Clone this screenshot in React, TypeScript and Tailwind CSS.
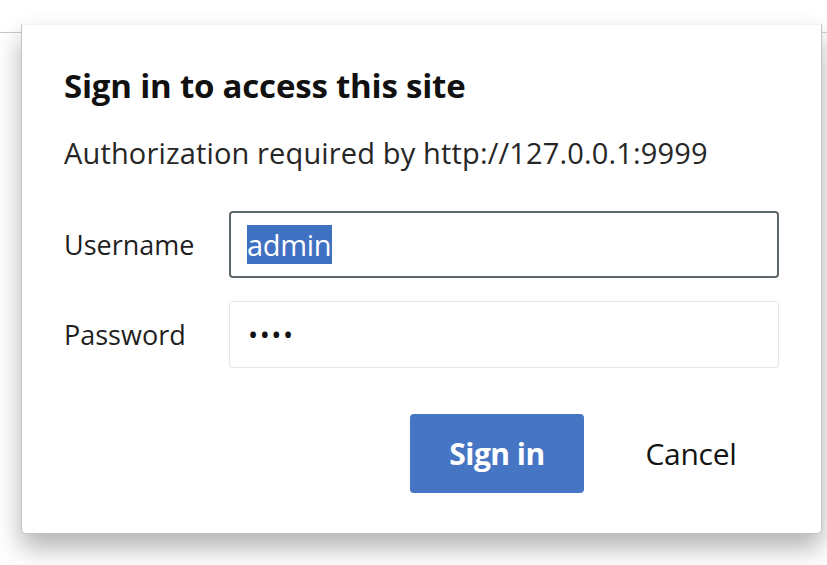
export default function App() {
  return (
    <div className="flex h-[565px] w-[827px] items-start overflow-hidden bg-white pt-[24px] font-['Open_Sans',sans-serif] text-[#1b1b1b]">
      {/* window edge behind the dialog */}
      <div className="mt-[8px] w-[21px] border-t border-[#c8c8c8]" />

      <div className="flex w-[801px] flex-col rounded-b-[5px] border border-t-[#f2f2f2] border-x-[#c4c4c4] border-b-[#c4c4c4] bg-white pl-[42px] pr-[42px] pt-[41px] pb-[40px] shadow-[0_14px_26px_rgba(0,0,0,0.3)]">
        <h1 className="text-[33px] font-bold leading-[40px] tracking-[-0.2px] text-[#111]">
          Sign in to access this site
        </h1>
        <p className="mt-[29px] text-[29px] leading-[36px] tracking-[0.15px] text-[#262626]">
          Authorization required by http://127.0.0.1:9999
        </p>

        <div className="mt-[40px] flex items-center">
          <label className="w-[165px] text-[27px] leading-[36px] text-[#1f1f1f]">Username</label>
          <div className="flex h-[67px] w-[550px] items-center rounded-[4px] border-2 border-[#5d676c] pl-[16px]">
            <span className="bg-[#3f70c2] pr-[1px] text-[29px] leading-[39px] tracking-[-0.3px] text-white">admin</span>
          </div>
        </div>

        <div className="mt-[23px] flex items-center">
          <label className="w-[165px] text-[27px] leading-[36px] text-[#1f1f1f]">Password</label>
          <div className="flex h-[67px] w-[550px] items-center rounded-[3px] border border-[#e6e6e6] pl-[18px]">
            <span className="text-[27px] leading-none tracking-[1.5px] text-[#111]">••••</span>
          </div>
        </div>

        <div className="mt-[46px] flex justify-end gap-[20px] pr-[1px]">
          <button className="h-[79px] w-[174px] rounded-[4px] bg-[#4676c3] text-[30px] font-bold tracking-[-0.5px] text-white">
            Sign in
          </button>
          <button className="h-[79px] w-[174px] rounded-[4px] bg-white text-[30px] tracking-[-0.3px] text-[#141414]">
            Cancel
          </button>
        </div>
      </div>

      <div className="mt-[8px] flex-1 border-t border-[#c8c8c8]" />
    </div>
  );
}
